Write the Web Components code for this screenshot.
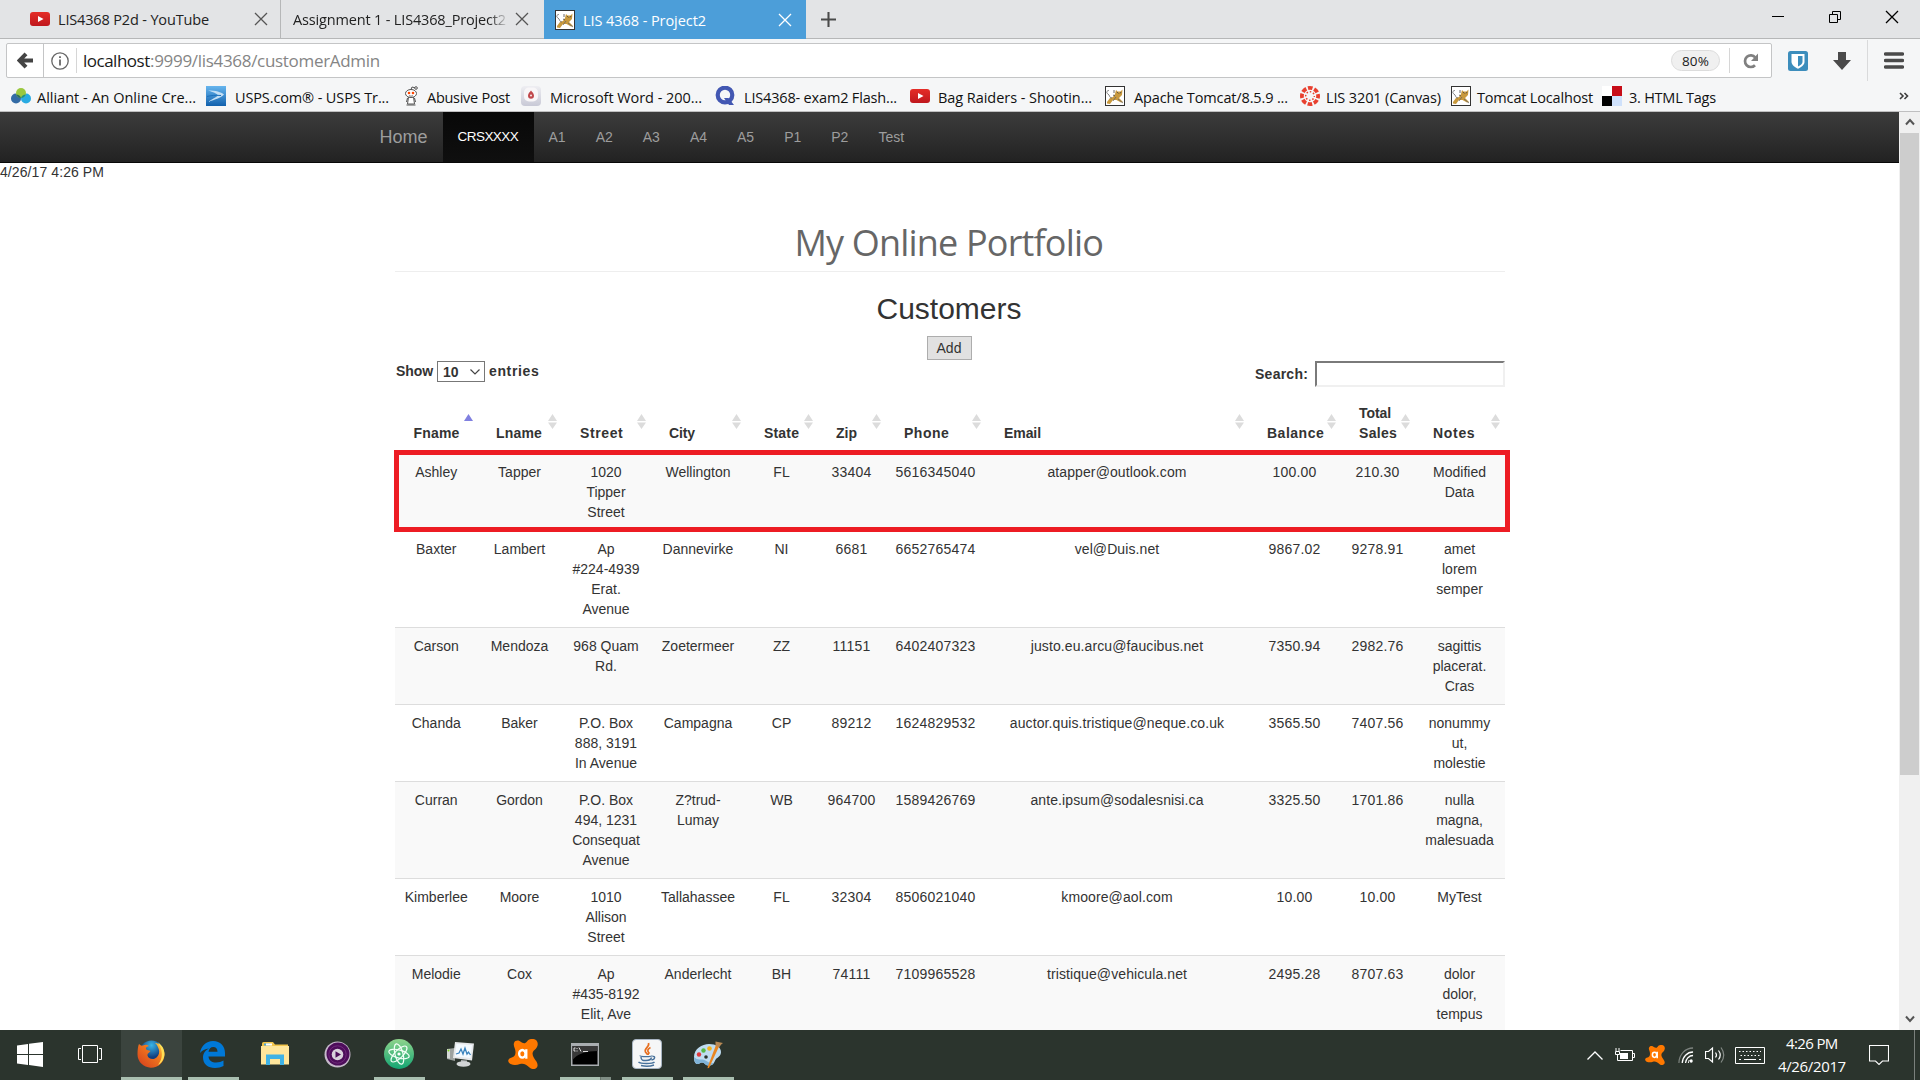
<!DOCTYPE html>
<html lang="en">
<head>
<meta charset="utf-8">
<title>LIS 4368 - Project2</title>
<style>
html,body{margin:0;padding:0;width:1920px;height:1080px;overflow:hidden;background:#fff}
body{font-family:"Open Sans","Noto Sans",sans-serif;color:#1a1a1a}
</style>
</head>
<body>
<desktop-screen></desktop-screen>
<script>
const define = (name, html, setup) => {
  const tpl = document.createElement('template');
  tpl.innerHTML = html;
  customElements.define(name, class extends HTMLElement {
    connectedCallback() {
      if (this.shadowRoot) return;
      this.attachShadow({mode: 'open'}).appendChild(tpl.content.cloneNode(true));
      if (setup) setup.call(this, this.shadowRoot);
    }
  });
};

/* Text spaced to occupy a given advance width */
define('fit-text', `<style>:host{display:block;flex:none;white-space:nowrap}span{display:inline-block;white-space:pre}</style><span><slot></slot></span>`,
function (root) {
  const w = +this.getAttribute('w'), span = root.querySelector('span');
  this.style.width = w + 'px';
  const natural = span.getBoundingClientRect().width;
  const n = this.textContent.length;
  if (natural && n) span.style.letterSpacing = ((w - natural) / (n - 0.5)).toFixed(3) + 'px';
});

const avast = `<path fill="#ff7800" d="M19 2.500C21-.5 26-1 28.500 1.500c2.500 3 1 7-2 9.500-2.500 2-2.500 5-.5 8 2 3 4 5 3.500 8-.7 3.500-5.500 4-8 1.500-3-3-6-4.500-9.500-3.500-3 1-6 1.500-9.500 0C-.5 23.500-.5 20 2.500 19c4-1 5-3 5-6C7.500 9 5 7 6 4c.8-2.500 3.500-3 5.500-2C14 3.500 16.500 6 19 2.500z"/><g fill="none" stroke="#fff" stroke-width="2.300"><ellipse cx="14.300" cy="14.800" rx="3.200" ry="3.800"/><path d="M18.300 10.200v9.500"/></g>`;
const ICONS = {
  youtube: ['0 0 20 14', `<defs><linearGradient id="g" x2="0" y2="1"><stop stop-color="#e52d27"/><stop offset="1" stop-color="#bf171d"/></linearGradient></defs><rect width="20" height="14" rx="3" fill="url(#g)"/><path d="M8 4l5.500 3L8 10z" fill="#fff"/>`],
  tomcat: ['0 0 20 20', `<rect x=".5" y=".5" width="19" height="19" fill="#fff" stroke="#333"/><path d="M2 16l3-4 3-1 2-3 1-4 1.500 1.500h3L17.500 3.500l-.5 5.500-3 3 4 4-2 .5-4.500-2.500L8 14l-3 4-3-.5z" fill="#c9993c"/><path d="M7 12c-3 0-2-3-4-4S1.500 4.500 4 4.500M13 13l5 4M11 11l-3 4" fill="none" stroke="#666" stroke-width=".8"/><path d="M9 4v3M8 9l2 1M12 6l1.500 1.500M16 6l-1 1.500" stroke="#444" stroke-width=".8"/>`],
  close: ['0 0 14 14', `<path d="M1 1l12 12M13 1L1 13" stroke="currentColor" stroke-width="1.300" fill="none"/>`],
  plus: ['0 0 16 16', `<path d="M8 0v16M0 8h16" stroke="#4a4a4a" stroke-width="2.200"/>`],
  min: ['0 0 12 14', `<path d="M0 6.500h12" stroke="#000"/>`],
  restore: ['0 0 12 12', `<path d="M.5 3.500h8v8h-8zM3.500 3.500v-3h8v8h-3" fill="none" stroke="#000"/>`],
  back: ['0 0 16 18', `<path d="M9 2L2.500 9 9 16M3 9h13" fill="none" stroke="#444" stroke-width="4"/>`],
  info: ['0 0 18 18', `<circle cx="9" cy="9" r="8.200" fill="none" stroke="#666" stroke-width="1.300"/><path d="M9 7.500v6M9 4.300v1.800" stroke="#666" stroke-width="1.800"/>`],
  reload: ['0 0 16 16', `<path d="M12 12.200A5.800 5.800 0 1 1 12.300 4.500" fill="none" stroke="#808080" stroke-width="2.700"/><path d="M15 .5V8H8z" fill="#808080"/>`],
  shield: ['0 0 20 20', `<rect width="20" height="20" rx="2.500" fill="#3c8dbc"/><path d="M3.500 3h13v8c0 3-3.500 5.300-6.500 6.700C7 16.300 3.500 14 3.500 11z" fill="#fff"/><path d="M10 5h4.500v6c0 1.800-2 3.200-4.500 4.500z" fill="#3c8dbc"/>`],
  download: ['0 0 18 18', `<path d="M5 0h8v8h5l-9 10L0 8h5z" fill="#4a4a4a"/>`],
  menu: ['0 0 20 18', `<path d="M1.500 2h17M1.500 8.500h17M1.500 15h17" stroke="#4a4a4a" stroke-width="3.400" stroke-linecap="round"/>`],
  alliant: ['0 0 20 16', `<circle cx="5" cy="10.500" r="5" fill="#336ba5"/><circle cx="15" cy="10.500" r="5" fill="#29abe2"/><circle cx="10" cy="5" r="5" fill="#9bc83f"/><path d="M5.300 6.500a5 5 0 0 1 4.700 3.500 5 5 0 0 1-4.700-3.500z" fill="#2c6e5c"/><path d="M14.700 6.500a5 5 0 0 0-4.700 3.500 5 5 0 0 0 4.700-3.500z" fill="#1d8f8a"/>`],
  usps: ['0 0 20 20', `<defs><linearGradient id="g" x2="0" y2="1"><stop stop-color="#66b5ee"/><stop offset="1" stop-color="#1261ad"/></linearGradient></defs><rect width="20" height="20" fill="url(#g)"/><path d="M2 4.500c8 0 13 1.500 16 4-2 3-9 5-16 7.500 3-2.500 8-4.500 10-6.500C11 7.500 7 6 2 4.500z" fill="#c3dff5"/><path d="M1 10.500c4-1 8-1.500 14-1" stroke="#1c70bc" fill="none"/>`],
  reddit: ['0 0 14 20', `<g fill="#fff" stroke="#555" stroke-width="1"><path d="M4.500 11h5l1 7h-7z"/><ellipse cx="7" cy="7.500" rx="5.500" ry="4"/><circle cx="12" cy="2" r="1.300"/><path d="M7 3.500L8 1l3 .8M3.500 12l-1 4M10.500 12l1 4M2.500 19h9" fill="none"/></g><circle cx="5" cy="7" r="1.300" fill="#ff4500"/><circle cx="9" cy="7" r="1.300" fill="#ff4500"/><path d="M5 9.700q2 1 4 0" fill="none" stroke="#444" stroke-width=".7"/>`],
  drop: ['0 0 20 20', `<defs><linearGradient id="g" x2="0" y2="1"><stop stop-color="#eeeef2"/><stop offset="1" stop-color="#c8c9d6"/></linearGradient></defs><rect width="20" height="20" rx="4" fill="url(#g)"/><rect x="3" y="1.500" width="14" height="14" rx="5" fill="#f8f6f8"/><path d="M10 4.500c1.200 1.800 3 2.800 3 5.200a3 3 0 0 1-6 0C7 7.300 8.800 6.300 10 4.500z" fill="#c0484c"/><circle cx="10" cy="9.500" r="1" fill="#f8e9e9"/>`],
  quizlet: ['0 0 20 20', `<circle cx="10" cy="9" r="7.300" fill="none" stroke="#4257b2" stroke-width="4.200"/><path d="M9 12h4.500l5.500 7h-5z" fill="#4257b2"/>`],
  canvas: ['0 0 20 20', `<circle cx="10" cy="10" r="8.100" fill="none" stroke="#e8402f" stroke-width="3.800" stroke-dasharray="4.600 1.762" stroke-dashoffset="2.300"/><circle cx="10" cy="10" r="4.300" fill="none" stroke="#e8402f" stroke-width="1.500" stroke-dasharray="1.500 1.877" stroke-dashoffset=".7"/>`],
  delicious: ['0 0 20 20', `<path fill="#fff" d="M0 0h10v10H0z"/><path fill="#c70d18" d="M10 0h10v10H10z"/><path fill="#000" d="M0 10h10v10H0z"/><path fill="#cfe1fb" d="M10 10h10v10H10z"/>`],
  more: ['0 0 10 8', `<path d="M1 1l3 3-3 3M5.500 1l3 3-3 3" fill="none" stroke="#3d3d3d" stroke-width="1.600"/>`],
  up: ['0 0 10 8', `<path d="M1 6.500l4-4.500 4 4.500" fill="none" stroke="#555" stroke-width="2"/>`],
  down: ['0 0 10 8', `<path d="M1 1.500L5 6l4-4.500" fill="none" stroke="#555" stroke-width="2"/>`],
  chev: ['0 0 10 6', `<path d="M.5 .5L5 5 9.500 .5" fill="none" stroke="#444" stroke-width="1.200"/>`],
  sort: ['0 0 9 15', `<path d="M4.500 0L9 7H0zM0 8.500h9L4.500 15z" fill="#dcdcdc"/>`],
  asc: ['0 0 9 15', `<path d="M4.500 0L9 7H0z" fill="#8080e0"/>`],
  windows: ['0 0 26 25', `<path d="M0 3.500L11 2v10H0zM12 1.800L26 0v12H12zM0 13h11v10L0 21.500zM12 13h14v12l-14-2z" fill="#fff"/>`],
  taskview: ['0 0 24 18', `<path d="M4.500.5h15v17h-15zM3 3.500H.5v11H3M21 3.500h2.500v11H21" fill="none" stroke="#fff"/>`],
  firefox: ['0 0 28 28', `<defs><radialGradient id="g" cx=".5" cy=".2"><stop stop-color="#39b5e8"/><stop offset="1" stop-color="#123f7f"/></radialGradient><linearGradient id="h" x1="0" y1="1" x2="1" y2="0"><stop stop-color="#d33a1d"/><stop offset=".6" stop-color="#f0781e"/><stop offset="1" stop-color="#ffe14d"/></linearGradient></defs><circle cx="14.500" cy="12.500" r="12" fill="url(#g)"/><path d="M2 4c1 1 2 2 4 1.500 2-1 4-1 6 .5-2 .5-3.500 1.500-3 3 .5 1.500 3 1 4.500 2-1 2-3.500 2-3 4.500.5 3 4.500 4.500 7.500 3 4-2 5-6.500 3.500-10C20.500 5.500 19 3.500 18 3c5 0 9.500 6 9.500 11.500A13.500 13.500 0 0 1 .5 14C.5 10 1 6 2 4z" fill="url(#h)"/><path d="M21 2.500c5 3 7.500 9 6 14.500-1.500 5-4 7-6 8 3.500-5 4.500-9 3.500-14-.5-3.500-2-6-3.500-8.500z" fill="#ffdf55"/>`],
  edge: ['0 0 25 27', `<path d="M0 12C1 5 6 0 13 0c7.500 0 12 5 12 12v3.500H8.500c.3 4 3.500 6 7.500 6 3 0 5.500-.8 7.500-2V25c-2.500 1.300-5 2-8.500 2C8 27 3 23 3 16.500c0-4 2.500-7.500 6-9C5 8 2 9.500 0 12zm8.500-1.300h9C17.500 8 16 6 13.200 6c-2.500 0-4.200 2-4.700 4.700z" fill="#0078d7"/>`],
  folder: ['0 0 28 24', `<path d="M1 1.500Q1 0 2.500 0H12l2 2.500h13V22H1z" fill="#f3c54b"/><path d="M3 1.500h6v2H3z" fill="#4aa9dc"/><path d="M5 1.500h6v2H5z" fill="#fff"/><path d="M0 4h28v18.500H0z" fill="#ffe69b"/><path d="M5 12.500h18V23h-4v-6H9v6H5z" fill="#3fb2e5"/>`],
  groove: ['0 0 27 27', `<circle cx="13.500" cy="13.500" r="13" fill="#c6b9cb"/><circle cx="14" cy="13" r="11.500" fill="#4d0d5a"/><circle cx="13.500" cy="13.500" r="8.700" fill="none" stroke="#702a7c" stroke-width="1"/><circle cx="13.500" cy="13.500" r="5.800" fill="#d9d2dc"/><path d="M11.500 10.300l5.500 3.200-5.500 3.200z" fill="#4d0d5a"/>`],
  atom: ['0 0 30 30', `<defs><linearGradient id="g" x2="0" y2="1"><stop stop-color="#8fd48c"/><stop offset="1" stop-color="#13a573"/></linearGradient></defs><circle cx="15" cy="15" r="15" fill="url(#g)"/><g fill="none" stroke="#f4fff8" stroke-width="1.200"><ellipse cx="15" cy="15" rx="10.500" ry="4" transform="rotate(15 15 15)"/><ellipse cx="15" cy="15" rx="10.500" ry="4" transform="rotate(75 15 15)"/><ellipse cx="15" cy="15" rx="10.500" ry="4" transform="rotate(135 15 15)"/></g><circle cx="15" cy="15" r="1.600" fill="#fff"/>`],
  perf: ['0 0 28 26', `<path d="M0 8l8-1v13l-8-2z" fill="#9da29f"/><path d="M0 8l3 .2v9.500L0 17z" fill="#d5d8d6"/><path d="M8 1l19 1.500-2 17L6 17z" fill="#e6e8ea"/><path d="M9.500 3l15.500 1-1.500 13L8 15.500z" fill="#f4faff"/><path d="M9 13l3-1 2-4 2 5 2-6 2 6 1.500-2 2 3" fill="none" stroke="#3a83be" stroke-width="1.300"/><path d="M14 19l6 .5V22h-6z" fill="#adb0b2"/><ellipse cx="16.500" cy="23" rx="7" ry="2.700" fill="#d2d5d6"/><circle cx="1.500" cy="9.500" r="1" fill="#7ed321"/>`],
  avast: ['0 0 30 30', avast],
  cmd: ['0 0 28 23', `<rect width="28" height="23" fill="#a9adb0"/><rect x="1.500" y="3" width="25" height="18.500" fill="#000"/><path d="M1.500 3h25v5C15 8 6 11 1.500 17z" fill="#383838"/><path d="M4.500 5H3v3h1.500M6 5v1M6 7.500v1M8 4.500l2 4M12 8.500h5" stroke="#ddd" fill="none"/>`],
  java: ['0 0 30 30', `<rect x=".5" y=".5" width="29" height="29" rx="3.500" fill="#f5f6f7" stroke="#a7b4c2"/><path d="M16.500 4c1.500 4-5 5.500-3 9l2 2.500M18.500 8.500c-3 1.500-3.500 3.500-1.500 5.500-1 1-1 1.500-1 2" fill="none" stroke="#e76f20" stroke-width="1.700"/><g fill="none" stroke="#47719b" stroke-width="1.400"><path d="M8 16.500c0 1.500 12 1.500 12 0M9 18c0 3.500 2 3.500 5 3.500s5-.5 5.500-3M20.500 17.500c3-1 3 3-1 3.500M6.500 23c2 2 14 2 16 0M9 26.500c4 1 9 1 13-.5"/></g>`],
  paint: ['0 0 30 30', `<path d="M1 18C1 10 9 5 16 5s12 3 12 8c0 4-3 5-5 7-2 3-2 7-8 6.500-3 0-3-3-6-3-2 0-2.500 2-5 1.500S1 21 1 18z" fill="#bfdcf0"/><path d="M1 18c0 3 1 6.500 3 7s3-1.500 5-1.500c3 0 3 3 6 3 3 .3 4.500-.7 5.500-2.500-5 1-7-3-11-3.500-3-.4-5 1-8.500-2.500z" fill="#7fb3d8"/><circle cx="6" cy="15.500" r="2.200" fill="#e0393c"/><circle cx="10.500" cy="11.500" r="2.200" fill="#58b947"/><circle cx="16.500" cy="9.500" r="2.300" fill="#f3b21c"/><circle cx="13" cy="18" r="1.800" fill="#2b342d"/><path d="M23 6l3 1.500L16 29l-1.500.3L15 27z" fill="#e98621"/><path d="M22.500 2.500L30 4c-2 1-2.500 3-4 4.500L22.500 6.500z" fill="#b98a56"/>`],
  tchev: ['0 0 16 9', `<path d="M.5 8.500L8 1l7.500 7.500" fill="none" stroke="#fff" stroke-width="1.300"/>`],
  battery: ['0 0 20 14', `<path d="M5.500 2.500h12v10h-12M17.500 5.500h2v4h-2M1 0v3M4 0v3M.5 3.500h4v3h-4zM2.500 7v5.500H6" fill="none" stroke="#fff"/><path d="M5 5h8v6H5z" fill="#fff"/>`],
  wifi: ['0 0 17 16', `<g fill="none"><path d="M1 16A15 15 0 0 1 16 1" stroke="#7d837f" stroke-width="1.300"/><path d="M4.500 16A11.500 11.500 0 0 1 16 5M8 16a8 8 0 0 1 8-7.500" stroke="#fff" stroke-width="1.300"/></g><circle cx="14" cy="14" r="1.700" fill="#fff"/><path d="M11 16a5 5 0 0 1 1-3" stroke="#fff" fill="none"/>`],
  speaker: ['0 0 20 18', `<path d="M.5 5.500h3L7.500 2v14l-4-3.500h-3z" fill="none" stroke="#fff" stroke-width="1.200"/><path d="M10.500 6.500q2 2.500 0 5M13.500 4.500q3.500 4.500 0 9" fill="none" stroke="#fff" stroke-width="1.200"/><path d="M16 1.500q5.500 7.500 0 15" fill="none" stroke="#848a86" stroke-width="1.200"/>`],
  keyboard: ['0 0 30 17', `<path d="M.5.500h29v16H.5z" fill="none" stroke="#fff"/><path d="M4 4.500h22M5.500 8.500h20" stroke="#fff" stroke-dasharray="1.500 2" fill="none"/><path d="M4 12.500h2M9 12.500h12M24 12.500h2" stroke="#fff"/>`],
  notify: ['0 0 20 20', `<path d="M.5.500h19v15.500h-6l-3.500 3.500L6.500 16h-6z" fill="none" stroke="#fff" stroke-width="1.100"/>`]
};
define('ui-icon', `<style>:host{display:block;flex:none}svg{display:block;width:100%;height:100%}</style>`, function (root) {
  const [box, body] = ICONS[this.getAttribute('name')];
  this.style.width = this.getAttribute('w') + 'px';
  this.style.height = this.getAttribute('h') + 'px';
  root.innerHTML += `<svg viewBox="${box}" preserveAspectRatio="none">${body}</svg>`;
});

define('browser-tab', `<style>
:host{display:flex;align-items:center;box-sizing:border-box;height:39px;border-right:1px solid #b6b7b8;font-size:14.500px;color:#222;flex:none}
:host([active]){background:#4c9ed9;color:#fff;border:0;position:relative}
</style><slot></slot>`);

define('tab-strip', `<style>
:host{display:flex;height:38px;background:#e3e4e6;border-bottom:1px solid #b6b7b8;align-items:flex-start}
browser-tab:not([active]){height:38px}
fit-text{padding-top:1px}
.fade{-webkit-mask-image:linear-gradient(90deg,#000 196px,transparent 216px)}
.x{color:#555}
.x.lit{color:#fff}
.win{display:flex;align-items:center;margin-left:auto;padding:10px 21px 0 0}
</style>
<browser-tab style="width:281px"><ui-icon name="youtube" w="20" h="14" style="margin-left:30px"></ui-icon><fit-text w="151" style="margin-left:8px">LIS4368 P2d - YouTube</fit-text><ui-icon class="x" name="close" w="14" h="14" style="margin-left:45px"></ui-icon></browser-tab>
<browser-tab style="width:263px;border:0"><fit-text class="fade" w="213" style="margin-left:12px">Assignment 1 - LIS4368_Project2</fit-text><ui-icon class="x" name="close" w="14" h="14" style="margin-left:9px"></ui-icon></browser-tab>
<browser-tab active style="width:262px"><ui-icon name="tomcat" w="20" h="20" style="margin-left:11px"></ui-icon><fit-text w="123" style="margin-left:8px">LIS 4368 - Project2</fit-text><ui-icon class="x lit" name="close" w="14" h="14" style="margin-left:72px"></ui-icon></browser-tab>
<ui-icon name="plus" w="15" h="15" style="margin:12px 0 0 15px"></ui-icon>
<div class="win"><ui-icon name="min" w="12" h="14"></ui-icon><ui-icon name="restore" w="12" h="12" style="margin-left:45px"></ui-icon><ui-icon name="close" w="14" h="14" style="margin-left:44px;color:#000"></ui-icon></div>`);

define('nav-toolbar', `<style>
:host{display:flex;height:43px;background:#f5f6f7;align-items:flex-start;padding:4px 0 0 6px;box-sizing:border-box}
.bar{display:flex;align-items:center;width:1766px;height:35px;box-sizing:border-box;background:#fff;border:1px solid #c4c5c6;border-radius:2px;font-size:17px}
.back{width:36px;height:33px;border-right:1px solid #c4c5c6;display:flex;align-items:center;justify-content:center}
.sep{width:1px;height:25px;background:#d6d6d6}
.grey{color:#858585}
.pill{margin-left:auto;width:49px;height:21px;box-sizing:border-box;border:1px solid #dcdcdc;background:#f0f0f0;border-radius:11px;font-size:13.500px;display:flex;align-items:center;justify-content:center}
.tools{display:flex;align-items:center;height:35px;padding-left:16px}
.line{width:1px;height:41px;background:#d9dadb}
</style>
<div class="bar"><div class="back"><ui-icon name="back" w="16" h="17"></ui-icon></div><ui-icon name="info" w="18" h="18" style="margin-left:7px"></ui-icon><div class="sep" style="margin-left:7px"></div><fit-text w="67" style="margin-left:6px">localhost</fit-text><fit-text class="grey" w="230">:9999/lis4368/customerAdmin</fit-text>
<div class="pill"><fit-text w="27">80%</fit-text></div><div class="sep" style="margin-left:9px"></div><ui-icon name="reload" w="16" h="16" style="margin:0 12px 0 13px"></ui-icon></div>
<div class="tools"><ui-icon name="shield" w="20" h="20"></ui-icon><ui-icon name="download" w="18" h="18" style="margin-left:25px"></ui-icon><div class="line" style="margin-left:16px"></div><ui-icon name="menu" w="20" h="18" style="margin-left:16px"></ui-icon></div>`);

const BOOKMARKS = [
  ['alliant', 20, 16, 6, 159, 10, 'Alliant - An Online Cre...'],
  ['usps', 20, 20, 9, 154, 15, 'USPS.com® - USPS Tr...'],
  ['reddit', 14, 20, 9, 83, 11, 'Abusive Post'],
  ['drop', 20, 20, 9, 152, 13, 'Microsoft Word - 200...'],
  ['quizlet', 20, 20, 9, 153, 13, 'LIS4368- exam2 Flash...'],
  ['youtube', 20, 14, 8, 154, 13, 'Bag Raiders - Shootin...'],
  ['tomcat', 20, 20, 9, 154, 12, 'Apache Tomcat/8.5.9 ...'],
  ['canvas', 20, 20, 6, 115, 10, 'LIS 3201 (Canvas)'],
  ['tomcat', 20, 20, 6, 116, 9, 'Tomcat Localhost'],
  ['delicious', 20, 20, 7, 87, 0, '3. HTML Tags']];
define('bookmark-bar', `<style>
:host{display:flex;align-items:center;height:29px;background:#f5f6f7;border-bottom:1px solid #bfbfc0;padding:0 11px;font-size:14.500px;color:#111}
ui-icon{margin-top:-2px}
fit-text{padding-top:1px}
</style>`, function (root) {
  root.innerHTML += BOOKMARKS.map(([i, w, h, g, tw, after, t]) =>
    `<ui-icon name="${i}" w="${w}" h="${h}"></ui-icon><fit-text w="${tw}" style="margin:0 ${after}px 0 ${g}px">${t}</fit-text>`).join('') +
    `<ui-icon name="more" w="10" h="8" style="margin-left:auto"></ui-icon>`;
});

define('site-navbar', `<style>
:host{display:flex;height:50px;border-bottom:1px solid #080808;background:linear-gradient(#3c3c3c,#222);padding-left:364.500px;font:14px/20px "Liberation Sans",Arial,sans-serif;color:#9d9d9d}
a{padding:15px}
.brand{font-size:18px}
.on{background:linear-gradient(#080808,#0f0f0f);color:#fff}
.on fit-text{font-size:13.500px}
</style><a class="brand">Home</a><a class="on"><fit-text w="61">CRSXXXX</fit-text></a><a>A1</a><a>A2</a><a>A3</a><a>A4</a><a>A5</a><a>P1</a><a>P2</a><a>Test</a>`);

const COLS = [['Fname', 46], ['Lname', 46], ['Street', 43], ['City', 26], ['State', 35], ['Zip', 21], ['Phone', 45], ['Email', 37], ['Balance', 57], ['Total\nSales', 38], ['Notes', 42]];
const ROWS = [
  'Ashley|Tapper|1020/Tipper/Street|Wellington|FL|33404|5616345040|atapper@outlook.com|100.00|210.30|Modified/Data',
  'Baxter|Lambert|Ap/#224-4939/Erat./Avenue|Dannevirke|NI|6681|6652765474|vel@Duis.net|9867.02|9278.91|amet/lorem/semper',
  'Carson|Mendoza|968 Quam/Rd.|Zoetermeer|ZZ|11151|6402407323|justo.eu.arcu@faucibus.net|7350.94|2982.76|sagittis/placerat./Cras',
  'Chanda|Baker|P.O. Box/888, 3191/In Avenue|Campagna|CP|89212|1624829532|auctor.quis.tristique@neque.co.uk|3565.50|7407.56|nonummy/ut,/molestie',
  'Curran|Gordon|P.O. Box/494, 1231/Consequat/Avenue|Z?trud-/Lumay|WB|964700|1589426769|ante.ipsum@sodalesnisi.ca|3325.50|1701.86|nulla/magna,/malesuada',
  'Kimberlee|Moore|1010/Allison/Street|Tallahassee|FL|32304|8506021040|kmoore@aol.com|10.00|10.00|MyTest',
  'Melodie|Cox|Ap/#435-8192/Elit, Ave|Anderlecht|BH|74111|7109965528|tristique@vehicula.net|2495.28|8707.63|dolor/dolor,/tempus'];
define('customer-table', `<style>
:host{display:block}
.r{display:grid;grid-template-columns:82.500px 84px 89px 95px 72px 68px 100px 263px 92px 74px 90px;border-top:1px solid #ddd}
.c{padding:8px 0;text-align:center;white-space:nowrap}
.n{letter-spacing:.22px}
.m{letter-spacing:.1px}
.r.odd{background:#f9f9f9}
.r.tall{min-height:76px}
.h{border:0;height:56px}
.h .c{display:flex;align-items:flex-end;padding:0 0 10.500px 18.500px;text-align:left;font-weight:bold;position:relative}
.h ui-icon{position:absolute;right:5px;top:17px}
.h div div{display:flex;flex-direction:column}
.mark{position:relative}
.mark::after{content:"";position:absolute;left:-1px;right:-5px;top:-4px;bottom:-2px;border:5px solid #ed1c24}
</style>`, function (root) {
  const head = COLS.map(([t, w], i) => `<div class="c"><div>${t.split('\n').map(s => `<fit-text w="${s === 'Total' ? 32 : w}">${s}</fit-text>`).join('')}</div><ui-icon name="${i ? 'sort' : 'asc'}" w="9" h="15"></ui-icon></div>`).join('');
  root.innerHTML += `<div class="r h">${head}</div>` + ROWS.map((r, k) =>
    `<div class="r tall${k % 2 ? '' : ' odd'}${k ? '' : ' mark'}">` + r.split('|').map(c => `<div class="c${/^[\d.]+$/.test(c) ? ' n' : /@/.test(c) ? ' m' : ''}">${c.split('/').join('<br>')}</div>`).join('') + '</div>').join('');
});

define('page-body', `<style>
:host{display:block;font:14px/20px "Liberation Sans",Arial,sans-serif;color:#333}
.stamp{height:20px;margin-top:-1px}
main{width:1110px;margin:0 auto;padding-left:1px}
h1{font:500 36px/40px "Open Sans",sans-serif;color:#666;margin:41px 0 8px;display:flex;justify-content:center;padding-right:2px}
hr{border:0;border-top:1px solid #eee;margin:0}
h2{font-size:30px;line-height:33px;font-weight:500;margin:20px 0 0;display:flex;justify-content:center;padding-right:2px}
.btn{display:flex;justify-content:center;padding:11px 2px 0 0}
.add{width:45px;height:24px;box-sizing:border-box;border:1px solid #adadad;background:#e1e1e1;display:flex;align-items:center;justify-content:center}
.ctl{display:flex;justify-content:space-between;font-weight:bold;margin-top:1px;height:36px}
.ctl>div{display:flex}
.sel{width:48px;height:21px;box-sizing:border-box;border:1px solid #777;display:flex;align-items:center;justify-content:space-between;padding:0 4px 0 5px;margin:0 4px}
.in{width:190px;height:26px;box-sizing:border-box;border:2px solid;border-color:#7a7a7a #f0f0f0 #f0f0f0 #7a7a7a;margin-left:7px}
</style>
<div class="stamp"><fit-text w="104">4/26/17 4:26 PM</fit-text></div>
<main>
<h1><fit-text w="309">My Online Portfolio</fit-text></h1><hr>
<h2><fit-text w="145">Customers</fit-text></h2>
<div class="btn"><div class="add"><fit-text w="25">Add</fit-text></div></div>
<div class="ctl"><div style="padding-left:1px"><fit-text w="37">Show</fit-text><div class="sel"><span>10</span><ui-icon name="chev" w="10" h="6"></ui-icon></div><fit-text w="50">entries</fit-text></div>
<div><fit-text w="53" style="margin-top:3px">Search:</fit-text><div class="in"></div></div></div>
<customer-table></customer-table>
</main>`);

define('scroll-bar', `<style>
:host{display:flex;flex-direction:column;align-items:center;width:21px;flex:none;background:#f0f0f0}
.t{width:19px;height:642px;background:#cdcdcd;margin-top:7px}
</style><ui-icon name="up" w="10" h="8" style="margin-top:6px"></ui-icon><div class="t"></div><ui-icon name="down" w="10" h="8" style="margin:auto 0 7px"></ui-icon>`);

const APPS = [['windows', 26, 25, 60, 0], ['taskview', 24, 18, 61, 0], ['firefox', 28, 28, 61, 2], ['edge', 25, 27, 63, 1], ['folder', 28, 24, 62, 0], ['groove', 27, 27, 62, 0], ['atom', 30, 30, 62, 1], ['perf', 28, 26, 62, 0], ['avast', 30, 30, 62, 0], ['cmd', 28, 23, 62, 3], ['java', 30, 30, 62, 1], ['paint', 30, 30, 62, 1]];
define('task-bar', `<style>
:host{display:flex;height:50px;background:#2b342d;color:#fff;font-size:15px}
.a{display:flex;flex-direction:column;align-items:center;height:50px;margin-right:-.1px}
.a .i{height:47px;width:61px;display:flex;align-items:center;justify-content:center;padding:1px 1px 0 0;box-sizing:border-box}
.a .u{height:3px;width:51px}
.s1 .u,.s2 .u,.s3 .u{background:#a9bfb0}
.s2 .i{background:#3b443e}.s2 .u{width:61px}
.s3 .u{background:linear-gradient(90deg,#a9bfb0 40px,#68756c 40px,#68756c 41px,#7f8d84 41px)}
.tray{display:flex;margin-left:auto;align-items:center;padding-right:5px}
.clock{display:flex;flex-direction:column;align-items:center;gap:3px;line-height:20px;width:68px;margin:-2px 0 0 13px}
.edge{width:1px;height:50px;background:#7a807c;margin-left:25px}
</style>`, function (root) {
  root.innerHTML += APPS.map(([n, w, h, cw, s]) => `<div class="a s${s}" style="width:${cw}px"><div class="i"><ui-icon name="${n}" w="${w}" h="${h}"></ui-icon></div><div class="u"></div></div>`).join('') +
  `<div class="tray"><ui-icon name="tchev" w="16" h="9"></ui-icon><ui-icon name="battery" w="20" h="14" style="margin-left:12px"></ui-icon><ui-icon name="avast" w="20" h="20" style="margin-left:10px"></ui-icon><ui-icon name="wifi" w="16" h="16" style="margin-left:13px"></ui-icon><ui-icon name="speaker" w="20" h="18" style="margin-left:11px"></ui-icon><ui-icon name="keyboard" w="30" h="17" style="margin-left:10px"></ui-icon><div class="clock"><fit-text w="52">4:26 PM</fit-text><fit-text w="68">4/26/2017</fit-text></div><ui-icon name="notify" w="20" h="20" style="margin-left:23px"></ui-icon><div class="edge"></div></div>`;
});

define('desktop-screen', `<style>
:host{display:flex;flex-direction:column;width:1920px;height:1080px;overflow:hidden}
tab-strip,nav-toolbar,bookmark-bar,task-bar{flex:none}
.view{display:flex;height:918px;overflow:hidden}
.page{flex:1;min-width:0;overflow:hidden}
</style><tab-strip></tab-strip><nav-toolbar></nav-toolbar><bookmark-bar></bookmark-bar>
<div class="view"><div class="page"><site-navbar></site-navbar><page-body></page-body></div><scroll-bar></scroll-bar></div>
<task-bar></task-bar>`);
</script>
</body>
</html>
